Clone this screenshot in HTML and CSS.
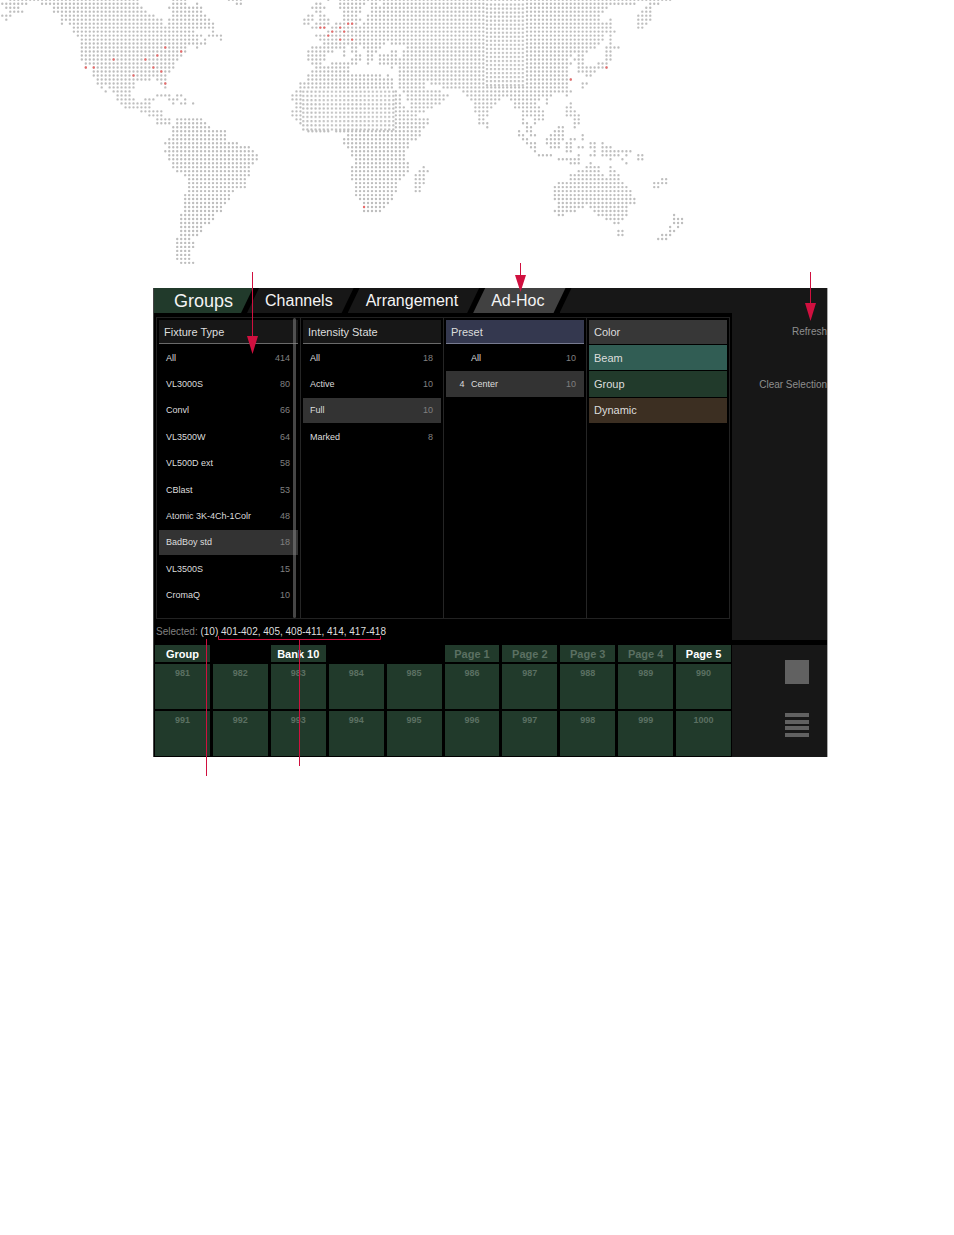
FILE: index.html
```html
<!DOCTYPE html>
<html lang="en">
<head>
  <meta charset="UTF-8" />
  <meta name="viewport" content="width=device-width, initial-scale=1.0" />
  <title>Ad-Hoc Groups</title>
  <link rel="stylesheet" href="styles.css">
</head>
<body>
  <svg class="world-map" viewBox="0 0 954 270" aria-hidden="true">
    <defs>
      <pattern id="africaDots" x="301.3" y="89.7" width="4.09" height="4.2" patternUnits="userSpaceOnUse">
        <circle cx="2" cy="2" r="1.15" />
      </pattern>
      <pattern id="asiaDots" x="485" y="2.6" width="3.98" height="4.03" patternUnits="userSpaceOnUse">
        <circle cx="2" cy="2" r="1.15" />
      </pattern>
    </defs>
    <g transform="translate(2.33 3.7) scale(3.975 3.987)">
      <path id="mapDots" class="dots" />
      <path id="mapCities" class="dots cities" />
    </g>
    <rect class="blank" x="485" y="2" width="40" height="84" />
    <rect x="485" y="2.6" width="39.8" height="84.6" fill="url(#asiaDots)" />
    <rect x="301.3" y="89.7" width="94" height="42" fill="url(#africaDots)" />
  </svg>

  <main class="figure">
    <div class="console">
      <nav class="tabs">
        <button class="tab groups">Groups</button>
        <button class="tab">Channels</button>
        <button class="tab">Arrangement</button>
        <button class="tab active">Ad-Hoc</button>
        <div class="tab-rest"></div>
      </nav>

      <section class="picker">
        <div class="columns">
          <div class="column scrolls">
            <h2>Fixture Type</h2>
            <div class="rows">
              <button class="row"><span>All</span><span class="count">414</span></button>
              <button class="row"><span>VL3000S</span><span class="count">80</span></button>
              <button class="row"><span>Convl</span><span class="count">66</span></button>
              <button class="row"><span>VL3500W</span><span class="count">64</span></button>
              <button class="row"><span>VL500D ext</span><span class="count">58</span></button>
              <button class="row"><span>CBlast</span><span class="count">53</span></button>
              <button class="row"><span>Atomic 3K-4Ch-1Colr</span><span class="count">48</span></button>
              <button class="row selected"><span>BadBoy std</span><span class="count">18</span></button>
              <button class="row"><span>VL3500S</span><span class="count">15</span></button>
              <button class="row"><span>CromaQ</span><span class="count">10</span></button>
            </div>
            <div class="scrollbar"></div>
          </div>
          <div class="column">
            <h2>Intensity State</h2>
            <div class="rows">
              <button class="row"><span>All</span><span class="count">18</span></button>
              <button class="row"><span>Active</span><span class="count">10</span></button>
              <button class="row selected"><span>Full</span><span class="count">10</span></button>
              <button class="row"><span>Marked</span><span class="count">8</span></button>
            </div>
          </div>
          <div class="column">
            <h2 class="preset">Preset</h2>
            <div class="rows">
              <button class="row"><span class="num"></span><span>All</span><span class="count">10</span></button>
              <button class="row selected"><span class="num">4</span><span>Center</span><span class="count">10</span></button>
            </div>
          </div>
          <div class="column">
            <button class="kind color">Color</button>
            <div class="rows">
              <button class="kind beam">Beam</button>
              <button class="kind group">Group</button>
              <button class="kind dynamic">Dynamic</button>
            </div>
          </div>
        </div>
        <p class="selection"><span class="label">Selected:</span> (10) 401-402, 405, 408-411, 414, 417-418</p>
      </section>

      <aside class="actions">
        <button class="action">Refresh</button>
        <button class="action">Clear Selection</button>
      </aside>

      <section class="banks">
        <button class="head on">Group</button>
        <button class="head on bank">Bank 10</button>
        <button class="head page">Page 1</button>
        <button class="head">Page 2</button>
        <button class="head">Page 3</button>
        <button class="head">Page 4</button>
        <button class="head on">Page 5</button>
        <button class="cell">981</button>
        <button class="cell">982</button>
        <button class="cell">983</button>
        <button class="cell">984</button>
        <button class="cell">985</button>
        <button class="cell">986</button>
        <button class="cell">987</button>
        <button class="cell">988</button>
        <button class="cell">989</button>
        <button class="cell">990</button>
        <button class="cell">991</button>
        <button class="cell">992</button>
        <button class="cell">993</button>
        <button class="cell">994</button>
        <button class="cell">995</button>
        <button class="cell">996</button>
        <button class="cell">997</button>
        <button class="cell">998</button>
        <button class="cell">999</button>
        <button class="cell">1000</button>
      </section>

      <aside class="views">
        <button class="view" aria-label="Single view">
          <svg width="24" height="24" viewBox="0 0 24 24"><path d="M0 0h24v24H0z" /></svg>
        </button>
        <button class="view" aria-label="List view">
          <svg width="24" height="24" viewBox="0 0 24 24"><path d="M0 0h24v4H0zM0 7h24v4H0zM0 13h24v4H0zM0 20h24v4H0z" /></svg>
        </button>
      </aside>
    </div>

    <svg class="callouts" viewBox="0 0 675 520" aria-hidden="true">
      <path class="line" d="M99.5 14V80" />
      <path class="line" d="M367.5 5V18" />
      <path class="line" d="M657.5 14V46" />
      <path class="line" d="M53.5 381V518" />
      <path class="line" d="M65.5 378V381.5H227.5V378" />
      <path class="line" d="M146.5 381V508" />
      <path class="tip" d="M94 78h11l-5.500 18zM362 17h11l-5.500 17zM652 45h11l-5.500 18z" />
    </svg>
  </main>

  <script src="map.js"></script>
</body>
</html>
```
FILE: styles.css
```css
* {
  box-sizing: border-box;
}
body {
  margin: 0;
  background: #fff;
  font-family: "Liberation Sans", Arial, sans-serif;
}
button {
  margin: 0;
  padding: 0;
  border: 0;
  background: none;
  color: inherit;
  font: inherit;
}

/* dotted map */
.world-map {
  display: block;
  width: 100%;
  fill: #bebebe;
}
.world-map .dots {
  fill: none;
  stroke: #bebebe;
  stroke-width: 0.6;
  stroke-linecap: round;
  stroke-dasharray: 0 1;
}
.world-map .cities {
  stroke: #ea6a6a;
}
.world-map .blank {
  fill: #fff;
}

.figure {
  position: relative;
  margin: 18px 126px 40px 153px;
}
.console {
  display: grid;
  grid-template-columns: 578fr 95fr;
  border-left: 1px solid #444;
  border-right: 1px solid #aaa;
  background: #000;
  color: #ddd;
}

/* tabs */
.tabs {
  grid-column: 1 / -1;
  display: flex;
  height: 25px;
}
.tab {
  padding: 1px 21px 0 18px;
  background: #171717;
  clip-path: polygon(12px 0, 100% 0, calc(100% - 12px) 100%, 0 100%);
  color: #f4f4f4;
  font-size: 16px;
}
.tab + .tab {
  margin-left: -6px;
}
.tab.groups {
  padding: 1px 20px 0;
  background: #213a2b;
  clip-path: polygon(0 0, 100% 0, calc(100% - 12px) 100%, 0 100%);
  font-size: 18px;
}
.tab.active {
  background: #414141;
}
.tab-rest {
  flex: 1;
  margin-left: -6px;
  background: #171717;
  clip-path: polygon(12px 0, 100% 0, 100% 100%, 0 100%);
}

/* picker columns */
.picker {
  padding: 4px 2px 0;
}
.columns {
  display: grid;
  grid-template-columns: repeat(4, 1fr);
  border: 1px solid #222;
}
.column {
  padding: 2px 2px 10px;
}
.column + .column {
  border-left: 1px solid #252525;
}
.scrolls {
  position: relative;
}
.scrollbar {
  position: absolute;
  top: 0;
  right: 4px;
  bottom: 0;
  width: 3px;
  border-radius: 2px;
  background: rgba(140, 140, 140, 0.5);
}
.column h2 {
  height: 24px;
  margin: 0 0 1px;
  padding-left: 5px;
  border-bottom: 1px solid #6a6a6a;
  background: #171717;
  font-size: 11px;
  font-weight: normal;
  line-height: 25px;
}
.column h2.preset {
  background: #34384f;
  border-color: #777b90;
}
.rows {
  display: grid;
  grid-template-rows: repeat(10, 1fr);
  gap: 1px;
  height: 263px;
}
.row {
  display: flex;
  align-items: center;
  padding: 0 8px 0 7px;
  font-size: 9px;
}
.row.selected {
  background: #333;
}
.num {
  width: 18px;
}
.count {
  margin-left: auto;
  color: #808080;
}
.kind {
  width: 100%;
  padding-left: 5px;
  font-size: 11px;
  text-align: left;
}
.kind.color {
  height: 24px;
  margin-bottom: 1px;
  background: #373737;
  vertical-align: top;
}
.kind.beam { background: #315d54; }
.kind.group { background: #213a2b; }
.kind.dynamic { background: #3c2f22; }

.selection {
  margin: 0;
  font-size: 10px;
  line-height: 26px;
}
.selection .label {
  color: #808080;
}

/* right hand side */
.actions {
  display: flex;
  flex-direction: column;
  align-items: flex-end;
  gap: 33px;
  margin-bottom: 5px;
  padding-top: 9px;
  background: #171717;
}
.action {
  color: #8e8e8e;
  font-size: 10px;
  line-height: 20px;
}
.views {
  display: flex;
  flex-direction: column;
  align-items: flex-end;
  gap: 29px;
  padding: 15px 18px 20px 0;
  background: #171717;
}
.view {
  height: 24px;
  fill: #616161;
}
.view svg {
  display: block;
}

/* bank grid */
.banks {
  display: grid;
  grid-template-columns: repeat(10, 1fr);
  grid-template-rows: 17px 45px 45px;
  gap: 2px 3px;
  padding: 0 1px 1px;
  color: #5b7062;
  font-weight: bold;
}
.head,
.cell {
  background: #213a2b;
}
.head {
  font-size: 11px;
}
.head.on {
  color: #fff;
}
.head.bank { grid-column: 3; }
.head.page { grid-column: 6; }
.cell {
  display: flex;
  justify-content: center;
  padding-top: 4px;
  font-size: 9px;
}

/* pointers drawn over the console */
.callouts {
  position: absolute;
  top: -30px;
  left: 0;
  width: 100%;
  overflow: visible;
  pointer-events: none;
}
.callouts .line {
  fill: none;
  stroke: #d0103f;
  stroke-width: 1;
}
.callouts .tip {
  fill: #d0103f;
}
```
FILE: map.js
```js
// one entry per line of dots, each a list of column ranges
const rows = [
  "2-34 43-46 57-60 82 85-168",
  "0-6 10-34 43-46 49 59-60 79-80 85-91 93-94 96-159 163-165",
  "1-4 13-35 42-50 78-81 85-90 93-152 162-163",
  "2-5 13-36 43-50 79-80 86-90 93-151 161-163",
  "0-2 15-38 43-51 77-78 80-81 86-89 92-150 160-163",
  "1 15-40 42-52 76-78 80-82 86-90 92-150 153 160-163",
  "15 17-40 42-53 76-77 79-82 84-89 91-153 160-162",
  "18-53 78-81 83-153 160-161",
  "18-48 53 82-154",
  "19-50 52-55 79-151 153",
  "20-49 51 55 80-151 153",
  "20-51 81-96 98-150 153",
  "20-46 49 78-86 88-89 91-95 102-149 152-155",
  "20-46 77-83 86 88-89 92-94 98-99 101-147 152-153",
  "20-45 77-81 86 89-90 92-93 95-99 101-143 145-146 152-153",
  "20-44 77-81 88-90 92-93 95-142 144-146 152-153",
  "21-43 78-80 83-89 92 95-143 145-146 150-152",
  "21 23-43 79-87 98 100-142 145-152",
  "23-42 78-87 100-142 145-149",
  "23-41 77-95 97 100-142 147-148",
  "24-37 39-41 77-98 100-143",
  "24-33 40-41 75-98 100-106 108-142 146-147",
  "25 27-33 41 75-98 100-106 111-142 146",
  "26 28-32 74-75 99 101-110 116-143",
  "29-32 39-42 44-45 73-75 99-100 102-112 117-138 142",
  "29-33 36-38 42-44 46 73-75 99-100 102-111 118-125 128-135 137",
  "30-37 43 45-46 48 74-75 99-100 103-110 119-124 129-134 137 143",
  "31-37 74-75 99-101 103-108 119-123 129-135 142-143",
  "35-40 73-75 99-106 119-122 131-136 142-144",
  "37-40 73-75 99-104 120-122 131-136 142-145",
  "39-42 44-50 74-75 99-107 120-121 131 134-136 144-145",
  "39-42 44-51 75 99-107 120-122 131-132 134 144-145",
  "43-52 99-106 122 132-133 140-141 144",
  "43-56 77-82 84-105 130 132-133 139-141",
  "43-56 87-105 130-131 133-134 138-141 146",
  "42-56 86-104 131-132 137-141 143-144 146",
  "41-59 86-102 132-134 137-140 142-143 148-149 151",
  "42-62 87-102 133-134 138-140 142-143 145-146 148-149 151-153",
  "41-63 88-101 134 142-143 149 151-158",
  "42-64 88-101 135-138 145 148-149 151-155 157 160-161",
  "42-64 89-101 140-145 153 156 160-161",
  "43-63 89-102 143-145 148 157",
  "43-62 88-102 106 147-150 153",
  "44-62 88-102 105-107 145-150 153-154",
  "46-62 88-101 104-106 143-151 153-155",
  "47-61 88-100 104-106 143-155 166-167",
  "47-61 89-99 104-106 140-156 164-167",
  "47-61 89-99 104-105 139-157 164-165",
  "47-58 89-99 104-105 139-158",
  "46-57 89-98 139-158",
  "46-57 90-98 139-159",
  "46-56 91-97 140-159",
  "46-55 91-96 140-146 148-157",
  "46-55 91-95 139-144 149-157",
  "45-53 140-141 150-157 169",
  "45-53 152-156 169-171",
  "45-52 154-155 169-171",
  "45-50 168 170",
  "45-50 155-156 168-169",
  "45-49 155-156 166-168",
  "44-47 165-167",
  "44-48",
  "44-48",
  "44-47",
  "44-47",
  "44-47",
  "45-48"
];

const cities = [
  [41, 11], [45, 12], [39, 13], [28, 14], [36, 14], [21, 16], [23, 16], [38, 16],
  [40, 17], [33, 18], [41, 20], [87, 5], [88, 5], [80, 6], [81, 6], [85, 6],
  [83, 7], [86, 7], [82, 8], [85, 9], [88, 9], [91, 51], [152, 16], [143, 19]
];

let d = "";
rows.forEach((row, i) => {
  row.split(" ").forEach(range => {
    const [from, to] = range.split("-").map(Number);
    d += `M${from} ${i - 1}h${(to || from) - from + 0.05}`;
  });
});
document.getElementById("mapDots").setAttribute("d", d);
document.getElementById("mapCities").setAttribute("d", cities.map(([x, y]) => `M${x} ${y}h0.05`).join(""));
```
